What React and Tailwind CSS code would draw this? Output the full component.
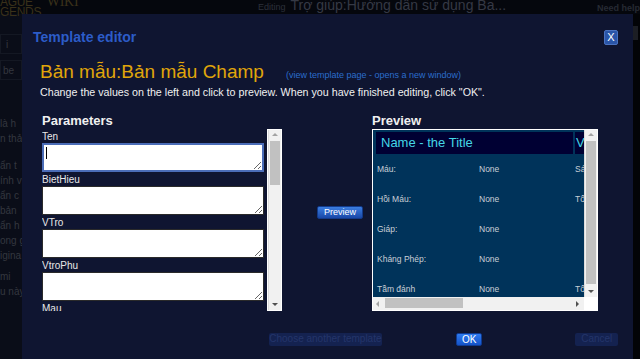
import React from 'react';

const params = ['Ten', 'BietHieu', 'VTro', 'VtroPhu', 'Mau'];

const rows = [
    ['Máu:', 'None', 'Sát'],
    ['Hồi Máu:', 'None', 'Tốc'],
    ['Giáp:', 'None', ''],
    ['Kháng Phép:', 'None', ''],
    ['Tầm đánh', 'None', 'Tốc'],
];

const bgLines = [
    ['là h', 'mt-[36px]'], ['n thả', ''], ['ẩn t', 'mt-[12px]'], ['ính v', ''], ['ẩn c', ''],
    ['bản', ''], ['ẩn h', ''], ['ong g', ''], ['igina', ''], ['mi', 'mt-[6px]'], ['u này', ''],
];

const VScroll = ({ thumbTop, thumbH }) => (
    <div className="relative w-[13px] h-full bg-[#f1f1f1] border-l border-[#dcdcdc]">
        <div className="absolute top-[3px] left-[3px] w-0 h-0 border-x-[3px] border-x-transparent border-b-[3px] border-b-[#a3a3a3]" />
        <div className="absolute left-[1px] w-[10px] bg-[#c1c1c1]" style={{ top: thumbTop, height: thumbH }} />
        <div className="absolute bottom-[4px] left-[3px] w-0 h-0 border-x-[3px] border-x-transparent border-t-[3px] border-t-[#505050]" />
    </div>
);

export default function App() {
    return (
        <div className="relative w-[640px] h-[359px] overflow-hidden bg-[#0a0d18]" style={{ fontFamily: '"Liberation Sans", Arial, sans-serif' }}>
            {/* page behind the dialog */}
            <div className="flex items-start h-[14px] bg-[#05070d]">
                <div className="w-[230px] -mt-[3px] text-[#3a311a] leading-[10px]">
                    <div className="text-[12px] tracking-tight">AGUE<span className="ml-[14px] text-[14px]" style={{ fontFamily: '"Liberation Serif", serif' }}>WIKI</span></div>
                    <div className="text-[12px] tracking-tight">GENDS</div>
                </div>
                <div className="text-[#2c303b] text-[9px] leading-[12px] ml-[28px] mt-px">Editing</div>
                <div className="text-[#353945] text-[14px] leading-[14px] ml-[5px] -mt-[2px]">Trợ giúp:Hướng dẫn sử dụng Ba...</div>
                <div className="ml-auto text-[#262a33] text-[9px] leading-[10px] mt-[3px] font-bold">Need help</div>
            </div>
            <div className="w-[22px] pt-[20px] text-[#34373f] text-[10px] leading-[15px]">
                <div className="h-[20px] border border-[#141823] pl-[5px] leading-[20px]">i</div>
                <div className="h-[20px] mt-[6px] border border-[#141823] pl-[2px] leading-[20px]">be</div>
                {bgLines.map(([t, m], i) => (
                    <div key={i} className={`whitespace-nowrap ${m}`}>{t}</div>
                ))}
            </div>
            <div className="absolute left-[633px] top-[14px] w-[7px] h-[345px] bg-[#030407]">
                <div className="mt-[12px] h-[14px] w-[5px] bg-[#1c1e24]" />
            </div>

            {/* dialog */}
            <div className="absolute left-[22px] top-[14px] w-[611px] h-[350px] bg-[#0f1531] pl-[11px] pr-[15px] pt-[15px]">
                <div className="flex items-center justify-between h-[17px]">
                    <span className="text-[14px] leading-[17px] font-bold text-[#2c5cc8]">Template editor</span>
                    <span className="w-[14px] h-[15px] bg-[#2a55a8] border border-[#4a72c0] rounded-[2px] text-white text-[11px] leading-[13px] text-center">X</span>
                </div>
                <div className="flex items-baseline ml-[7px] mt-[14px]">
                    <span className="text-[19px] leading-[24px] text-[#e0a60a]">Bản mẫu:Bản mẫu Champ</span>
                    <span className="ml-[22px] text-[9px] text-[#2b6dcc]">(view template page - opens a new window)</span>
                </div>
                <div className="ml-[7px] mt-[1px] text-[10.7px] leading-[14px] text-[#f0f0f0] whitespace-nowrap">
                    Change the values on the left and click to preview. When you have finished editing, click "OK".
                </div>

                <div className="flex ml-[9px] mt-[14px]">
                    {/* parameters */}
                    <div className="w-[240px]">
                        <div className="text-[13px] leading-[16px] font-bold text-[#f0f0f0]">Parameters</div>
                        <div className="flex h-[182px]">
                            <div className="w-[227px] h-full overflow-hidden">
                                {params.map((p, i) => (
                                    <div key={p}>
                                        <div className="mt-[2px] text-[10px] leading-[12px] text-[#e8e8e8]">{p}</div>
                                        <div className="relative w-[222px] h-[29px]">
                                            <textarea
                                                readOnly
                                                className={`block w-full h-full bg-white text-[10px] resize-y outline-none ${i === 0 ? 'border-2 border-[#4b6db8]' : 'border border-[#2a2a2a]'}`}
                                            />
                                            {i === 0 && <span className="absolute left-[4px] top-[4px] w-px h-[12px] bg-black" />}
                                        </div>
                                    </div>
                                ))}
                            </div>
                            <div className="border border-white h-full">
                                <VScroll thumbTop={11} thumbH={44} />
                            </div>
                        </div>
                    </div>

                    {/* preview button */}
                    <div className="w-[90px] pt-[93px]">
                        <div className="ml-[35px] w-[46px] h-[13px] rounded-[2px] bg-gradient-to-b from-[#3b7de0] to-[#1a48a8] border border-[#123a8a] text-white text-[9px] leading-[11px] text-center">Preview</div>
                    </div>

                    {/* preview */}
                    <div className="w-[226px]">
                        <div className="text-[13px] leading-[16px] font-bold text-[#f0f0f0]">Preview</div>
                        <div className="h-[182px] bg-white p-px">
                            <div className="flex h-[167px]">
                                <div className="w-[211px] h-full overflow-hidden bg-[#00335a] pl-[3px] pt-[2px]">
                                    <div className="flex w-[260px] h-[22px]">
                                        <div className="w-[197px] bg-[#000033] text-[#44d6e6] text-[13px] leading-[22px] pl-[5px]">Name - the Title</div>
                                        <div className="ml-[2px] w-[60px] bg-[#000033] text-[#44d6e6] text-[13px] leading-[22px] pl-px">Vai trò</div>
                                    </div>
                                    {rows.map(([a, b, c], i) => (
                                        <div key={i} className="flex w-[260px] h-[30px] items-center text-[8.5px] text-[#c9cfd6]">
                                            <span className="w-[103px] pl-px">{a}</span>
                                            <span className="w-[96px]">{b}</span>
                                            <span>{c}</span>
                                        </div>
                                    ))}
                                </div>
                                <VScroll thumbTop={11} thumbH={143} />
                            </div>
                            <div className="flex h-[13px]">
                                <div className="relative w-[211px] h-full bg-[#f1f1f1]">
                                    <div className="absolute left-[3px] top-[4px] w-0 h-0 border-y-[3px] border-y-transparent border-r-[3px] border-r-[#a3a3a3]" />
                                    <div className="absolute left-[12px] top-[1px] w-[78px] h-[10px] bg-[#c1c1c1]" />
                                    <div className="absolute right-[5px] top-[4px] w-0 h-0 border-y-[3px] border-y-transparent border-l-[3px] border-l-[#505050]" />
                                </div>
                                <div className="w-[13px] bg-white" />
                            </div>
                        </div>
                    </div>
                </div>

                {/* footer buttons */}
                <div className="flex items-center mt-[22px] text-[10px] leading-[12px]">
                    <span className="ml-[236px] w-[114px] h-[13px] rounded-[2px] bg-[#142250] text-[#24356a] text-center">Choose another template</span>
                    <span className="ml-[74px] w-[27px] h-[13px] rounded-[2px] bg-gradient-to-b from-[#2f7bf0] to-[#1452c8] border border-[#0f3a90] text-white text-center">OK</span>
                    <span className="ml-[93px] w-[43px] h-[13px] rounded-[2px] bg-[#142250] text-[#24356a] text-center">Cancel</span>
                </div>
            </div>
        </div>
    );
}
